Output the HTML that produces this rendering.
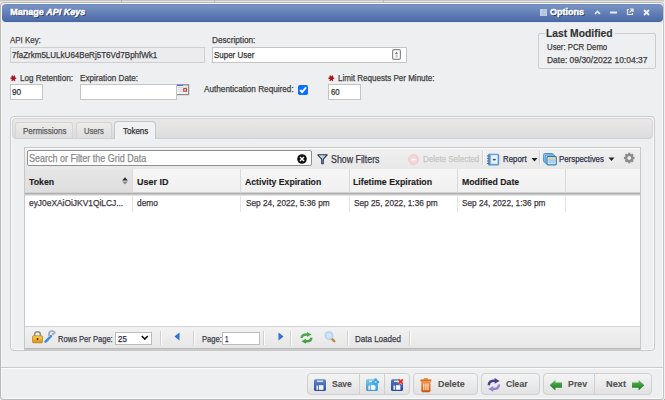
<!DOCTYPE html>
<html><head><meta charset="utf-8"><style>
html,body{margin:0;padding:0;}
body{width:665px;height:400px;overflow:hidden;position:relative;background:#eeeff1;font-family:"Liberation Sans",sans-serif;}
.t{position:absolute;white-space:nowrap;transform-origin:0 0;}
svg{overflow:visible}
</style></head><body>
<div style="position:absolute;left:0px;top:0px;width:665px;height:400px;background:#eeeff1"></div>
<div style="position:absolute;left:0px;top:0px;width:665px;height:1px;background:#c6c6c6"></div>
<div style="position:absolute;left:0px;top:1px;width:665px;height:1px;background:#e6e6e4"></div>
<div style="position:absolute;left:664px;top:0px;width:1px;height:400px;background:#f0f0f0"></div>
<div style="position:absolute;left:121px;top:0px;width:1px;height:2px;background:#b0b0b0"></div>
<div style="position:absolute;left:214px;top:0px;width:1px;height:2px;background:#b8b8b8"></div>
<div style="position:absolute;left:383px;top:0px;width:1px;height:2px;background:#b8b8b8"></div>
<div style="position:absolute;left:0px;top:2px;width:664px;height:398px;box-sizing:border-box;border:1px solid #b8b8b8;border-right-color:#c4c4c4;border-radius:4px;box-shadow:inset 1px 1px 0 #f6f6f4,inset -1px -1px 0 #fafafa"></div>
<div style="position:absolute;left:664px;top:399px;width:1px;height:1px;background:#a8a8a8"></div>
<div style="position:absolute;left:2px;top:4px;width:661px;height:18px;background:linear-gradient(#6f8dc2,#7791c2 12%,#4b6aa9 95%,#45649f);border-radius:4px"></div>
<div style="position:absolute;left:2px;top:22px;width:661px;height:1px;background:#e6e7ea"></div>
<div class="t" style="left:10.3px;top:5px;font-size:9px;line-height:14px;font-weight:bold;color:#fff;text-shadow:1px 1px 0.5px #22325c;-webkit-text-stroke:0.45px #fff">Manage <i>API Keys</i></div>
<svg style="position:absolute;left:540px;top:9px" width="7" height="7" viewBox="0 0 7 7"><rect x="0" y="0" width="7" height="7" fill="#c3cde0"/><rect x="2.6" y="0" width="0.8" height="7" fill="#a9b6cf"/><rect x="4.6" y="0" width="0.8" height="7" fill="#b3bfd5"/></svg>
<div class="t" style="left:550px;top:5px;font-size:9px;line-height:14px;font-weight:bold;color:#fff;text-shadow:1px 1px 0.5px #22325c;-webkit-text-stroke:0.45px #fff">Options</div>
<svg style="position:absolute;left:594px;top:10px" width="7" height="5" viewBox="0 0 7 5"><polyline points="1,4 3.5,1.5 6,4" fill="none" stroke="#e8edf6" stroke-width="1.6"/></svg>
<svg style="position:absolute;left:610px;top:11px" width="7" height="3" viewBox="0 0 7 3"><rect x="0" y="0.5" width="7" height="2" fill="#e8edf6"/></svg>
<svg style="position:absolute;left:625.5px;top:8px" width="8" height="8" viewBox="0 0 8 8"><path d="M3,1.5 H1.5 V6.5 H6.5 V5" fill="none" stroke="#e8edf6" stroke-width="1.1"/><path d="M4,1 H7 V4 M7,1 L3.5,4.5" fill="none" stroke="#e8edf6" stroke-width="1.2"/></svg>
<svg style="position:absolute;left:643px;top:9px" width="7" height="7" viewBox="0 0 7 7"><path d="M1,1 L6,6 M6,1 L1,6" stroke="#eef2f8" stroke-width="1.8"/></svg>
<div class="t" style="left:9.76px;top:34px;font-size:9px;line-height:13px;transform:scaleX(0.8796);color:#3e3e3e;-webkit-text-stroke:0.25px #3e3e3e;">API Key:</div>
<div style="position:absolute;left:10px;top:47px;width:195px;height:16px;box-sizing:border-box;border:1px solid #cfcfcf;background:#ececee"></div>
<div class="t" style="left:12.26px;top:49px;font-size:9px;line-height:13px;transform:scaleX(0.8911);color:#3a3a3a;-webkit-text-stroke:0.25px #3a3a3a;">7faZrkm5LULkU64BeRj5T6Vd7BphfWk1</div>
<div class="t" style="left:211.66px;top:34px;font-size:9px;line-height:13px;transform:scaleX(0.9134);color:#3e3e3e;-webkit-text-stroke:0.25px #3e3e3e;">Description:</div>
<div style="position:absolute;left:212px;top:47px;width:195px;height:16px;box-sizing:border-box;border:1px solid #c4c4c4;background:#fff"></div>
<div class="t" style="left:214.46px;top:49px;font-size:9px;line-height:13px;transform:scaleX(0.8854);color:#333;-webkit-text-stroke:0.25px #333;">Super User</div>
<svg style="position:absolute;left:392px;top:49px" width="9" height="11" viewBox="0 0 9 11"><rect x="0.6" y="0.6" width="7.8" height="9.8" rx="1.5" fill="#fff" stroke="#8a8a8a" stroke-width="1.2"/><path d="M4.5,2.5 L6,5 H3 Z" fill="#777"/><rect x="3.5" y="5.5" width="2" height="3" fill="#bbb"/></svg>
<div style="position:absolute;left:538px;top:33px;width:118px;height:36px;box-sizing:border-box;border:1px solid #cdcdcd;border-radius:2px"></div>
<div style="position:absolute;left:545px;top:30px;width:70px;height:7px;background:#eeeff1"></div>
<div class="t" style="left:546.10px;top:26px;font-size:10.5px;line-height:15px;font-weight:bold;transform:scaleX(0.9843);color:#333;-webkit-text-stroke:0.15px #333;">Last Modified</div>
<div class="t" style="left:546.76px;top:41px;font-size:9px;line-height:13px;transform:scaleX(0.8661);color:#3e3e3e;-webkit-text-stroke:0.25px #3e3e3e;">User: PCR Demo</div>
<div class="t" style="left:546.76px;top:54px;font-size:9px;line-height:13px;transform:scaleX(0.9421);color:#3e3e3e;-webkit-text-stroke:0.25px #3e3e3e;">Date: 09/30/2022 10:04:37</div>
<svg style="position:absolute;left:9.7px;top:74.8px" width="7" height="7" viewBox="0 0 7 7"><path d="M0.4,3.2 H6.2 M1.85,0.6 L4.75,5.8 M4.75,0.6 L1.85,5.8" stroke="#b01c24" stroke-width="1.5"/><circle cx="3.3" cy="3.2" r="1.7" fill="#a8101a"/></svg>
<div class="t" style="left:20.16px;top:72px;font-size:9px;line-height:13px;transform:scaleX(0.9054);color:#3e3e3e;-webkit-text-stroke:0.25px #3e3e3e;">Log Retention:</div>
<div style="position:absolute;left:10px;top:84px;width:33px;height:16px;box-sizing:border-box;border:1px solid #c4c4c4;background:#fff"></div>
<div class="t" style="left:12.26px;top:86px;font-size:9px;line-height:13px;transform:scaleX(0.9191);color:#333;-webkit-text-stroke:0.25px #333;">90</div>
<div class="t" style="left:80.46px;top:72px;font-size:9px;line-height:13px;transform:scaleX(0.9059);color:#3e3e3e;-webkit-text-stroke:0.25px #3e3e3e;">Expiration Date:</div>
<div style="position:absolute;left:80px;top:84px;width:97px;height:16px;box-sizing:border-box;border:1px solid #c4c4c4;background:#fff"></div>
<svg style="position:absolute;left:177px;top:84px" width="12" height="11" viewBox="0 0 12 11"><rect x="0" y="0" width="12" height="11" fill="#fafafa"/><path d="M0,3.5 H11 M0,5.5 H11 M0,7.5 H11 M3,1.5 V10 M6,1.5 V10 M9,1.5 V10" stroke="#d4d4d4" stroke-width="0.8"/><rect x="0" y="0.5" width="6" height="1.2" fill="#2233b8"/><rect x="6" y="0" width="6" height="1.6" fill="#9a9a9a"/><rect x="11" y="0" width="1.2" height="11" fill="#8a8a8a"/><rect x="0" y="10" width="12" height="1.2" fill="#8a8a8a"/><rect x="6.8" y="4.6" width="2.6" height="2.6" fill="#fff" stroke="#c03838" stroke-width="1.1"/></svg>
<div class="t" style="left:204.36px;top:83px;font-size:9px;line-height:13px;transform:scaleX(0.9101);color:#3e3e3e;-webkit-text-stroke:0.25px #3e3e3e;">Authentication Required:</div>
<svg style="position:absolute;left:298px;top:84.6px" width="10" height="10" viewBox="0 0 10 10"><rect x="0" y="0" width="10" height="10" rx="1.8" fill="#0a6efc"/><path d="M2.1,5 L4.1,7.1 L8.1,2.3" fill="none" stroke="#fff" stroke-width="1.9"/></svg>
<svg style="position:absolute;left:328.2px;top:74.8px" width="7" height="7" viewBox="0 0 7 7"><path d="M0.4,3.2 H6.2 M1.85,0.6 L4.75,5.8 M4.75,0.6 L1.85,5.8" stroke="#b01c24" stroke-width="1.5"/><circle cx="3.3" cy="3.2" r="1.7" fill="#a8101a"/></svg>
<div class="t" style="left:338.46px;top:72px;font-size:9px;line-height:13px;transform:scaleX(0.8932);color:#3e3e3e;-webkit-text-stroke:0.25px #3e3e3e;">Limit Requests Per Minute:</div>
<div style="position:absolute;left:328px;top:84px;width:33px;height:16px;box-sizing:border-box;border:1px solid #c4c4c4;background:#fff"></div>
<div class="t" style="left:331.16px;top:86px;font-size:9px;line-height:13px;transform:scaleX(0.8692);color:#333;-webkit-text-stroke:0.25px #333;">60</div>
<div style="position:absolute;left:10px;top:116px;width:645px;height:235px;box-sizing:border-box;border:1px solid #c9c9c9;border-radius:4px;box-shadow:inset 0 0 0 1px #fafafa"></div>
<div style="position:absolute;left:12px;top:118px;width:641px;height:21px;box-sizing:border-box;border:1px solid #d2d2d2;border-radius:4px 4px 4px 4px;background:linear-gradient(#e9e9e9,#dcdcdc)"></div>
<div style="position:absolute;left:15px;top:122px;width:58px;height:16px;box-sizing:border-box;border:1px solid #d4d4d4;border-bottom:none;border-radius:3px 3px 0 0;background:linear-gradient(#ececec,#dedede)"></div>
<div class="t" style="left:22.86px;top:125px;font-size:9px;line-height:13px;transform:scaleX(0.8855);color:#5a5a5a;-webkit-text-stroke:0.25px #5a5a5a;">Permissions</div>
<div style="position:absolute;left:76px;top:122px;width:36px;height:16px;box-sizing:border-box;border:1px solid #d4d4d4;border-bottom:none;border-radius:3px 3px 0 0;background:linear-gradient(#ececec,#dedede)"></div>
<div class="t" style="left:84.46px;top:125px;font-size:9px;line-height:13px;transform:scaleX(0.8425);color:#5a5a5a;-webkit-text-stroke:0.25px #5a5a5a;">Users</div>
<div style="position:absolute;left:114px;top:121px;width:42px;height:18px;box-sizing:border-box;border:1px solid #c6c6c6;border-bottom:none;border-radius:4px 4px 0 0;background:#f0f1f3"></div>
<div style="position:absolute;left:115px;top:138px;width:40px;height:2px;background:#eff0f2"></div>
<div class="t" style="left:122.86px;top:125px;font-size:9px;line-height:13px;transform:scaleX(0.8873);color:#333;-webkit-text-stroke:0.25px #333;">Tokens</div>
<div style="position:absolute;left:24px;top:147px;width:617px;height:203px;box-sizing:border-box;border:1px solid #c8c8c8;background:#fff"></div>
<div style="position:absolute;left:25px;top:148px;width:615px;height:21px;background:linear-gradient(#f0f0f0,#e8e8e8)"></div>
<div style="position:absolute;left:25px;top:148px;width:615px;height:1px;background:#fbfbfb"></div>
<div style="position:absolute;left:27px;top:150px;width:285px;height:16px;box-sizing:border-box;border:1px solid #8f8f8f;border-radius:2px;background:#fff"></div>
<div class="t" style="left:29.20px;top:152px;font-size:10px;line-height:14px;transform:scaleX(0.8974);color:#8a8a8a;-webkit-text-stroke:0.25px #8a8a8a;">Search or Filter the Grid Data</div>
<svg style="position:absolute;left:297px;top:154px" width="10" height="10" viewBox="0 0 10 10"><circle cx="5" cy="5" r="4.8" fill="#111"/><path d="M3,3 L7,7 M7,3 L3,7" stroke="#fff" stroke-width="1.4"/></svg>
<svg style="position:absolute;left:317px;top:154px" width="11" height="11" viewBox="0 0 11 11"><defs><linearGradient id="fn" x1="0" y1="0" x2="1" y2="0"><stop offset="0" stop-color="#f4f8fc"/><stop offset="1" stop-color="#8fb6de"/></linearGradient></defs><path d="M0.8,0.8 H10.2 L6.3,5.2 V9.6 L4.7,9.6 V5.2 Z" fill="url(#fn)" stroke="#27354a" stroke-width="1.1" stroke-linejoin="round"/><rect x="4.9" y="5.6" width="1.2" height="4" fill="#6a7a8e"/></svg>
<div class="t" style="left:330.60px;top:153px;font-size:10px;line-height:14px;transform:scaleX(0.8816);color:#3a3a48;-webkit-text-stroke:0.25px #3a3a48;">Show Filters</div>
<svg style="position:absolute;left:407.5px;top:154px" width="11" height="11" viewBox="0 0 11 11"><circle cx="5.5" cy="5.5" r="4.9" fill="#f3d6d6" stroke="#eec4c4" stroke-width="0.9"/><rect x="3.4" y="4.8" width="4.2" height="1.5" fill="#fff"/></svg>
<div class="t" style="left:422.53px;top:152px;font-size:9.5px;line-height:14px;transform:scaleX(0.8395);color:#c6c6c6;-webkit-text-stroke:0.25px #c6c6c6;">Delete Selected</div>
<div style="position:absolute;left:482px;top:151px;width:1px;height:14px;background:#d0d0d0"></div>
<div style="position:absolute;left:483px;top:151px;width:1px;height:14px;background:#fafafa"></div>
<svg style="position:absolute;left:487px;top:153px" width="13" height="13" viewBox="0 0 13 13"><rect x="0.8" y="0.8" width="11.4" height="11.6" rx="1.5" fill="#5592d0"/><rect x="3.8" y="2" width="7" height="9" fill="#e6f1fb" stroke="#9cc4ea" stroke-width="0.6"/><ellipse cx="7.3" cy="6.6" rx="1.7" ry="0.9" fill="#505050"/><path d="M0,3 H2.2 M0,5.5 H2.2 M0,8 H2.2 M0,10.5 H2.2" stroke="#6a6a6a" stroke-width="0.9"/></svg>
<div class="t" style="left:502.93px;top:152px;font-size:9.5px;line-height:14px;transform:scaleX(0.8277);color:#2e2e44;-webkit-text-stroke:0.25px #2e2e44;">Report</div>
<svg style="position:absolute;left:531px;top:158px" width="7" height="4" viewBox="0 0 7 4"><path d="M0.5,0 H6.5 L3.5,3.5 Z" fill="#222"/></svg>
<div style="position:absolute;left:539px;top:151px;width:1px;height:14px;background:#d0d0d0"></div>
<div style="position:absolute;left:540px;top:151px;width:1px;height:14px;background:#fafafa"></div>
<svg style="position:absolute;left:543px;top:153px" width="14" height="12" viewBox="0 0 14 12"><rect x="0.7" y="0.7" width="9.5" height="8.5" rx="1.6" fill="#cfe3f5" stroke="#4a92cf" stroke-width="1.2"/><rect x="2.2" y="2" width="9.5" height="8.5" rx="1.5" fill="#d8eaf8" stroke="#4a92cf" stroke-width="1.1"/><rect x="4" y="3.5" width="9.3" height="8.3" rx="1.2" fill="#fff" stroke="#2f7fc0" stroke-width="1.3"/><rect x="4.7" y="4.5" width="8" height="1.1" fill="#f0c040"/><rect x="5.2" y="6" width="7" height="4.6" fill="#a9cdee"/></svg>
<div class="t" style="left:559.13px;top:152px;font-size:9.5px;line-height:14px;transform:scaleX(0.8257);color:#2e2e44;-webkit-text-stroke:0.25px #2e2e44;">Perspectives</div>
<svg style="position:absolute;left:608px;top:157px" width="7" height="5" viewBox="0 0 7 5"><path d="M0.5,0.5 H6.5 L3.5,4 Z" fill="#222"/></svg>
<svg style="position:absolute;left:623px;top:152px" width="13" height="12" viewBox="0 0 13 12"><g transform="translate(6.25,6)"><circle r="3.1" fill="none" stroke="#8c8c8c" stroke-width="2.4"/><rect x="-1.1" y="-5.3" width="2.2" height="2.6" fill="#8c8c8c" transform="rotate(0)"/><rect x="-1.1" y="-5.3" width="2.2" height="2.6" fill="#8c8c8c" transform="rotate(45)"/><rect x="-1.1" y="-5.3" width="2.2" height="2.6" fill="#8c8c8c" transform="rotate(90)"/><rect x="-1.1" y="-5.3" width="2.2" height="2.6" fill="#8c8c8c" transform="rotate(135)"/><rect x="-1.1" y="-5.3" width="2.2" height="2.6" fill="#8c8c8c" transform="rotate(180)"/><rect x="-1.1" y="-5.3" width="2.2" height="2.6" fill="#8c8c8c" transform="rotate(225)"/><rect x="-1.1" y="-5.3" width="2.2" height="2.6" fill="#8c8c8c" transform="rotate(270)"/><rect x="-1.1" y="-5.3" width="2.2" height="2.6" fill="#8c8c8c" transform="rotate(315)"/></g></svg>
<div style="position:absolute;left:25px;top:169px;width:615px;height:24px;background:linear-gradient(#f6f6f6,#f0f0f0)"></div>
<div style="position:absolute;left:25px;top:169px;width:108px;height:24px;background:linear-gradient(#e6e6e6,#dedede)"></div>
<div style="position:absolute;left:25px;top:192px;width:615px;height:1px;background:#d0d0d0"></div>
<div style="position:absolute;left:25px;top:193px;width:615px;height:1px;background:#b0b0b0"></div>
<div style="position:absolute;left:25px;top:194px;width:615px;height:1px;background:#c6c6c6"></div>
<div style="position:absolute;left:25px;top:195px;width:615px;height:1px;background:#e6e6e6"></div>
<div style="position:absolute;left:132px;top:169px;width:1px;height:24px;background:#dadada"></div>
<div style="position:absolute;left:132px;top:196px;width:1px;height:16px;background:#e4e4e4"></div>
<div style="position:absolute;left:240px;top:169px;width:1px;height:24px;background:#dadada"></div>
<div style="position:absolute;left:240px;top:196px;width:1px;height:16px;background:#e4e4e4"></div>
<div style="position:absolute;left:349px;top:169px;width:1px;height:24px;background:#dadada"></div>
<div style="position:absolute;left:349px;top:196px;width:1px;height:16px;background:#e4e4e4"></div>
<div style="position:absolute;left:457px;top:169px;width:1px;height:24px;background:#dadada"></div>
<div style="position:absolute;left:457px;top:196px;width:1px;height:16px;background:#e4e4e4"></div>
<div style="position:absolute;left:565px;top:169px;width:1px;height:24px;background:#dadada"></div>
<div style="position:absolute;left:565px;top:196px;width:1px;height:16px;background:#e4e4e4"></div>
<div class="t" style="left:29.04px;top:175px;font-size:9.5px;line-height:14px;font-weight:bold;transform:scaleX(0.9241);color:#1e1e1e;-webkit-text-stroke:0.15px #1e1e1e;">Token</div>
<svg style="position:absolute;left:122.3px;top:176.5px" width="6" height="8" viewBox="0 0 6 8"><path d="M3,0.2 L5.8,3.5 H0.2 Z" fill="#2a2a2a"/><path d="M3,7.6 L5.8,4.5 H0.2 Z" fill="#8a8a8a"/></svg>
<div class="t" style="left:137.04px;top:175px;font-size:9.5px;line-height:14px;font-weight:bold;transform:scaleX(0.9440);color:#1e1e1e;-webkit-text-stroke:0.15px #1e1e1e;">User ID</div>
<div class="t" style="left:245.34px;top:175px;font-size:9.5px;line-height:14px;font-weight:bold;transform:scaleX(0.9136);color:#1e1e1e;-webkit-text-stroke:0.15px #1e1e1e;">Activity Expiration</div>
<div class="t" style="left:353.34px;top:175px;font-size:9.5px;line-height:14px;font-weight:bold;transform:scaleX(0.9250);color:#1e1e1e;-webkit-text-stroke:0.15px #1e1e1e;">Lifetime Expiration</div>
<div class="t" style="left:461.64px;top:175px;font-size:9.5px;line-height:14px;font-weight:bold;transform:scaleX(0.9185);color:#1e1e1e;-webkit-text-stroke:0.15px #1e1e1e;">Modified Date</div>
<div class="t" style="left:28.63px;top:196px;font-size:9.5px;line-height:14px;transform:scaleX(0.8833);color:#3c3440;-webkit-text-stroke:0.25px #3c3440;">eyJ0eXAiOiJKV1QiLCJ...</div>
<div class="t" style="left:137.03px;top:196px;font-size:9.5px;line-height:14px;transform:scaleX(0.8795);color:#3c3440;-webkit-text-stroke:0.25px #3c3440;">demo</div>
<div class="t" style="left:245.53px;top:196px;font-size:9.5px;line-height:14px;transform:scaleX(0.8698);color:#3c3440;-webkit-text-stroke:0.25px #3c3440;">Sep 24, 2022, 5:36 pm</div>
<div class="t" style="left:353.53px;top:196px;font-size:9.5px;line-height:14px;transform:scaleX(0.8698);color:#3c3440;-webkit-text-stroke:0.25px #3c3440;">Sep 25, 2022, 1:36 pm</div>
<div class="t" style="left:461.83px;top:196px;font-size:9.5px;line-height:14px;transform:scaleX(0.8667);color:#3c3440;-webkit-text-stroke:0.25px #3c3440;">Sep 24, 2022, 1:36 pm</div>
<div style="position:absolute;left:25px;top:326px;width:615px;height:1px;background:#d2d2d2"></div>
<div style="position:absolute;left:25px;top:327px;width:615px;height:21px;background:linear-gradient(#f2f2f2,#e6e6e6)"></div>
<div style="position:absolute;left:25px;top:348px;width:615px;height:1px;background:#bdbdbd"></div>
<svg style="position:absolute;left:32px;top:331px" width="11" height="12" viewBox="0 0 11 12"><defs><linearGradient id="lk" x1="0" y1="0" x2="0" y2="1"><stop offset="0" stop-color="#f9d35a"/><stop offset="1" stop-color="#dc8e12"/></linearGradient></defs><path d="M2.6,5.2 V3.6 A2.9,2.9 0 0 1 8.4,3.6 V5.2" fill="none" stroke="#8e8e8e" stroke-width="1.5"/><rect x="0.5" y="4.8" width="10" height="7" rx="1" fill="url(#lk)" stroke="#b47a10" stroke-width="0.7"/><circle cx="5.5" cy="8" r="0.9" fill="#3a2400"/></svg>
<svg style="position:absolute;left:44px;top:331px" width="12" height="12" viewBox="0 0 12 12"><path d="M1.6,10.6 L7,5.2" stroke="#3a8ee0" stroke-width="2.6" stroke-linecap="round"/><path d="M6.2,5.8 A3.2,3.2 0 1 1 10.8,1.6 L9,3.4 L8.2,2.4" fill="none" stroke="#9aa4b0" stroke-width="1.6"/></svg>
<div class="t" style="left:57.63px;top:332px;font-size:9.5px;line-height:14px;transform:scaleX(0.7969);color:#3a3a48;-webkit-text-stroke:0.25px #3a3a48;">Rows Per Page:</div>
<div style="position:absolute;left:115px;top:332px;width:37px;height:13px;box-sizing:border-box;border:1px solid #bcbcbc;background:#fff"></div>
<div class="t" style="left:118.43px;top:332px;font-size:9.5px;line-height:14px;transform:scaleX(0.8329);color:#2a2a44;-webkit-text-stroke:0.25px #2a2a44;">25</div>
<svg style="position:absolute;left:141px;top:335px" width="8" height="6" viewBox="0 0 8 6"><polyline points="0.8,1 3.8,4 6.8,1" fill="none" stroke="#111" stroke-width="1.6"/></svg>
<div style="position:absolute;left:160px;top:331px;width:1px;height:14px;background:#d0d0d0"></div>
<div style="position:absolute;left:161px;top:331px;width:1px;height:14px;background:#fbfbfb"></div>
<svg style="position:absolute;left:174px;top:332px" width="6" height="9" viewBox="0 0 6 9"><path d="M5.5,0.5 V8.5 L0.5,4.5 Z" fill="#2f6fd6"/></svg>
<div style="position:absolute;left:193px;top:331px;width:1px;height:14px;background:#d0d0d0"></div>
<div style="position:absolute;left:194px;top:331px;width:1px;height:14px;background:#fbfbfb"></div>
<div class="t" style="left:201.83px;top:332px;font-size:9.5px;line-height:14px;transform:scaleX(0.7976);color:#3a3a48;-webkit-text-stroke:0.25px #3a3a48;">Page:</div>
<div style="position:absolute;left:222px;top:332px;width:38px;height:13px;box-sizing:border-box;border:1px solid #bcbcbc;background:#fff"></div>
<div class="t" style="left:225.23px;top:332px;font-size:9.5px;line-height:14px;transform:scaleX(0.6625);color:#2a2a44;-webkit-text-stroke:0.25px #2a2a44;">1</div>
<div style="position:absolute;left:263px;top:331px;width:1px;height:14px;background:#d0d0d0"></div>
<div style="position:absolute;left:264px;top:331px;width:1px;height:14px;background:#fbfbfb"></div>
<svg style="position:absolute;left:278px;top:332px" width="6" height="9" viewBox="0 0 6 9"><path d="M0.5,0.5 V8.5 L5.5,4.5 Z" fill="#2f6fd6"/></svg>
<div style="position:absolute;left:290px;top:331px;width:1px;height:14px;background:#d0d0d0"></div>
<div style="position:absolute;left:291px;top:331px;width:1px;height:14px;background:#fbfbfb"></div>
<svg style="position:absolute;left:300px;top:331.5px" width="13" height="12" viewBox="0 0 13 12"><path d="M1.6,6 C1.8,3.2 4,2.3 7.4,2.5" fill="none" stroke="#4fa84f" stroke-width="2.4"/><path d="M7,0 L11.6,2.5 L7,5 Z" fill="#4fa84f"/><path d="M11.4,5.6 C11.2,8.6 9,9.5 5.6,9.3" fill="none" stroke="#45a045" stroke-width="2.4"/><path d="M6,6.8 L1.4,9.3 L6,11.8 Z" fill="#45a045"/></svg>
<svg style="position:absolute;left:324px;top:331px" width="12" height="12" viewBox="0 0 12 12"><path d="M7.6,7.6 L10.2,10.2" stroke="#c88a48" stroke-width="2.6" stroke-linecap="round"/><circle cx="5" cy="4.6" r="4" fill="#c4dcf6" stroke="#a8c8ec" stroke-width="0.8"/><circle cx="5" cy="4.6" r="2.2" fill="#d4e6f8"/></svg>
<div style="position:absolute;left:347px;top:331px;width:1px;height:14px;background:#d0d0d0"></div>
<div style="position:absolute;left:348px;top:331px;width:1px;height:14px;background:#fbfbfb"></div>
<div class="t" style="left:355.43px;top:332px;font-size:9.5px;line-height:14px;transform:scaleX(0.8437);color:#3a3a48;-webkit-text-stroke:0.25px #3a3a48;">Data Loaded</div>
<div style="position:absolute;left:409px;top:331px;width:1px;height:14px;background:#d0d0d0"></div>
<div style="position:absolute;left:410px;top:331px;width:1px;height:14px;background:#fbfbfb"></div>
<div style="position:absolute;left:1px;top:367px;width:662px;height:1px;background:#cbcbcb"></div>
<div style="position:absolute;left:1px;top:368px;width:662px;height:1px;background:#fbfbfb"></div>
<div style="position:absolute;left:307px;top:373px;width:103px;height:22px;box-sizing:border-box;border:1px solid #cfcfcf;border-radius:4px;background:linear-gradient(#f4f4f4,#ebebeb 50%,#e2e2e2)"></div>
<div style="position:absolute;left:359px;top:374px;width:1px;height:20px;background:#d0d0d0"></div>
<div style="position:absolute;left:384px;top:374px;width:1px;height:20px;background:#d0d0d0"></div>
<svg style="position:absolute;left:314px;top:379px" width="13" height="13" viewBox="0 0 13 13"><defs><linearGradient id="fg1" x1="0" y1="0" x2="0" y2="1"><stop offset="0" stop-color="#6289cc"/><stop offset="1" stop-color="#2a50a2"/></linearGradient></defs><rect x="0" y="0.2" width="12" height="11.8" rx="1.6" fill="url(#fg1)"/><rect x="3" y="1.6" width="6" height="1.3" fill="#eef3fa"/><rect x="2.4" y="6.6" width="1.5" height="4.2" fill="#f4f8fc"/><rect x="4.8" y="6.2" width="4.6" height="4.6" fill="#f4f8fc"/></svg>
<div class="t" style="left:332.44px;top:377px;font-size:9.5px;line-height:14px;font-weight:bold;transform:scaleX(0.8925);color:#555;-webkit-text-stroke:0.15px #555;">Save</div>
<svg style="position:absolute;left:366px;top:379px" width="13" height="13" viewBox="0 0 13 13"><defs><linearGradient id="fg2" x1="0" y1="0" x2="0" y2="1"><stop offset="0" stop-color="#78c4ee"/><stop offset="1" stop-color="#3b9ad8"/></linearGradient></defs><rect x="0" y="0.2" width="12" height="11.8" rx="1.6" fill="url(#fg2)"/><rect x="3" y="1.6" width="6" height="1.3" fill="#eef3fa"/><rect x="2.4" y="6.6" width="1.5" height="4.2" fill="#f4f8fc"/><rect x="4.8" y="6.2" width="4.6" height="4.6" fill="#f4f8fc"/><path d="M9.6,0.6 V5.4 M7.2,3 H12" stroke="#3ea4e2" stroke-width="2.6" stroke-linecap="round"/><circle cx="9.6" cy="3" r="1" fill="#bfe4f8"/></svg>
<svg style="position:absolute;left:391px;top:379px" width="13" height="13" viewBox="0 0 13 13"><defs><linearGradient id="fg3" x1="0" y1="0" x2="0" y2="1"><stop offset="0" stop-color="#5477c4"/><stop offset="1" stop-color="#27489a"/></linearGradient></defs><rect x="0" y="0.2" width="12" height="11.8" rx="1.6" fill="url(#fg3)"/><rect x="3" y="1.6" width="6" height="1.3" fill="#eef3fa"/><rect x="2.4" y="6.6" width="1.5" height="4.2" fill="#f4f8fc"/><rect x="4.8" y="6.2" width="4.6" height="4.6" fill="#f4f8fc"/><path d="M7.4,0.4 L11.8,4.8 M11.8,0.4 L7.4,4.8" stroke="#fff" stroke-width="3" opacity="0.7"/><path d="M7.4,0.4 L11.8,4.8 M11.8,0.4 L7.4,4.8" stroke="#e2321e" stroke-width="1.7"/></svg>
<div style="position:absolute;left:413px;top:373px;width:65px;height:22px;box-sizing:border-box;border:1px solid #cfcfcf;border-radius:4px;background:linear-gradient(#f4f4f4,#ebebeb 50%,#e2e2e2)"></div>
<svg style="position:absolute;left:420px;top:378px" width="12" height="15" viewBox="0 0 12 15"><defs><linearGradient id="tr" x1="0" y1="0" x2="0" y2="1"><stop offset="0" stop-color="#f49040"/><stop offset="1" stop-color="#c8520e"/></linearGradient></defs><rect x="0.4" y="1.2" width="11" height="2.2" rx="0.6" fill="url(#tr)"/><rect x="3.8" y="0.2" width="4.2" height="1.6" rx="0.5" fill="#e07a2a"/><path d="M1.3,3.6 H10.5 V12.6 Q10.5,14.2 9,14.2 H2.8 Q1.3,14.2 1.3,12.6 Z" fill="url(#tr)"/><path d="M3.8,5.6 V12.2 M5.9,5.6 V12.2 M8,5.6 V12.2" stroke="#fff3e6" stroke-width="1.1"/></svg>
<div class="t" style="left:437.84px;top:377px;font-size:9.5px;line-height:14px;font-weight:bold;transform:scaleX(0.9364);color:#555;-webkit-text-stroke:0.15px #555;">Delete</div>
<div style="position:absolute;left:481px;top:373px;width:59px;height:22px;box-sizing:border-box;border:1px solid #cfcfcf;border-radius:4px;background:linear-gradient(#f4f4f4,#ebebeb 50%,#e2e2e2)"></div>
<svg style="position:absolute;left:487px;top:378px" width="14" height="14" viewBox="0 0 14 14"><path d="M1.8,7.2 C1.8,3.8 4.2,2.6 8,2.8" fill="none" stroke="#4b3d8f" stroke-width="2.5"/><path d="M7.6,0 L12.6,2.9 L7.6,5.8 Z" fill="#4b3d8f"/><path d="M12,6.6 C12,10 9.6,11.2 5.8,11" fill="none" stroke="#9b82cc" stroke-width="2.5"/><path d="M6.2,8 L1.2,10.9 L6.2,13.8 Z" fill="#9b82cc"/></svg>
<div class="t" style="left:505.54px;top:377px;font-size:9.5px;line-height:14px;font-weight:bold;transform:scaleX(0.9048);color:#555;-webkit-text-stroke:0.15px #555;">Clear</div>
<div style="position:absolute;left:543px;top:373px;width:109px;height:22px;box-sizing:border-box;border:1px solid #cfcfcf;border-radius:4px;background:linear-gradient(#f4f4f4,#ebebeb 50%,#e2e2e2)"></div>
<div style="position:absolute;left:594px;top:374px;width:1px;height:20px;background:#d0d0d0"></div>
<svg style="position:absolute;left:549px;top:380px" width="14" height="11" viewBox="0 0 14 11"><defs><linearGradient id="ga" x1="0" y1="0" x2="0" y2="1"><stop offset="0" stop-color="#62b862"/><stop offset="0.5" stop-color="#3a9a3a"/><stop offset="1" stop-color="#237023"/></linearGradient></defs><path d="M0.6,5.2 L6.4,0 V2.6 H13 V7.8 H6.4 V10.4 Z" fill="url(#ga)"/></svg>
<div class="t" style="left:568.14px;top:377px;font-size:9.5px;line-height:14px;font-weight:bold;transform:scaleX(0.9321);color:#555;-webkit-text-stroke:0.15px #555;">Prev</div>
<div class="t" style="left:606.44px;top:377px;font-size:9.5px;line-height:14px;font-weight:bold;transform:scaleX(0.9713);color:#555;-webkit-text-stroke:0.15px #555;">Next</div>
<svg style="position:absolute;left:631px;top:380px" width="14" height="11" viewBox="0 0 14 11"><path d="M13.4,5.2 L7.6,0 V2.6 H1 V7.8 H7.6 V10.4 Z" fill="url(#ga)"/></svg>
</body></html>
